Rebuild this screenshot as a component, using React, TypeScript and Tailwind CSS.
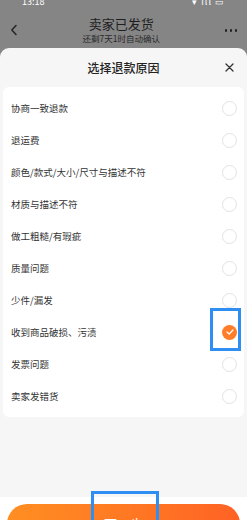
import React from "react";

const reasons = [
  "协商一致退款",
  "退运费",
  "颜色/款式/大小/尺寸与描述不符",
  "材质与描述不符",
  "做工粗糙/有瑕疵",
  "质量问题",
  "少件/漏发",
  "收到商品破损、污渍",
  "发票问题",
  "卖家发错货",
];

const selected = 7;

const App = () => {
  return (
    <div className="flex h-[520px] w-[247px] flex-col overflow-hidden bg-[#858585] font-['Noto_Sans_CJK_SC',sans-serif]">
      {/* dimmed page header */}
      <div className="shrink-0">
        <div className="flex h-[6px] items-end justify-between overflow-hidden px-[22px] text-[9px] leading-[9px] text-white">
          <span>13:18</span>
          <span className="tracking-[1px]">▾ ıll ▭</span>
        </div>
        <div className="flex h-[42px] items-start justify-between px-[10px]">
          <svg width="8" height="12" viewBox="0 0 8 12" className="mt-[18px]">
            <path d="M6 1.5L1.8 6L6 10.5" fill="none" stroke="#222" strokeWidth="1.4" strokeLinecap="round" strokeLinejoin="round" />
          </svg>
          <div className="flex flex-col items-center pt-[10px]">
            <p className="text-[13px] leading-[16px] text-[#1e1e1e]">卖家已发货</p>
            <p className="mt-[1px] text-[8.5px] leading-[11px] text-[#2a2a2a]">还剩7天1时自动确认</p>
          </div>
          <div className="mt-[23px] flex gap-[2.5px]">
            <span className="h-[2.5px] w-[2.5px] rounded-full bg-[#222]" />
            <span className="h-[2.5px] w-[2.5px] rounded-full bg-[#222]" />
            <span className="h-[2.5px] w-[2.5px] rounded-full bg-[#222]" />
          </div>
        </div>
      </div>

      {/* bottom sheet */}
      <div className="flex shrink-0 flex-col rounded-t-[9px] bg-[#f6f6f6]">
        <div className="grid h-[39px] grid-cols-[1fr_auto_1fr] items-center">
          <span />
          <p className="text-[12px] font-medium text-[#222]">选择退款原因</p>
          <div className="flex justify-end pr-[13px]">
            <svg width="9" height="9" viewBox="0 0 9 9">
              <path d="M1 1L8 8M8 1L1 8" stroke="#333" strokeWidth="1.3" strokeLinecap="round" />
            </svg>
          </div>
        </div>

        <div className="mx-[3px] rounded-[6px] bg-white py-[5px]">
          {reasons.map((r, i) => (
            <div key={r} className="relative flex h-[32px] items-center justify-between pl-[8px] pr-[7px]">
              <span className="text-[9.5px] text-[#333]">{r}</span>
              {i === selected ? (
                <span className="flex h-[15px] w-[15px] items-center justify-center rounded-full bg-[#ff7c28]">
                  <svg width="8" height="6" viewBox="0 0 8 6">
                    <path d="M1 3L3.2 5L7 1" fill="none" stroke="#fff" strokeWidth="1.2" strokeLinecap="round" strokeLinejoin="round" />
                  </svg>
                </span>
              ) : (
                <span className="h-[15px] w-[15px] rounded-full border border-[#e3e3e3]" />
              )}
              {i === selected && (
                <span className="absolute right-[3px] top-[-8px] bottom-[-3px] w-[31px] border-[3px] border-[#2e8ef2]" />
              )}
            </div>
          ))}
        </div>

        <div className="h-[80px]" />

        <div className="relative bg-white px-[7px] pt-[7px] pb-[10px]">
          <div className="flex h-[40px] items-center justify-center rounded-full bg-gradient-to-r from-[#ff8e22] to-[#ff6224]">
            <span className="text-[13px] text-white">下一步</span>
          </div>
          <span className="absolute left-[91px] top-[-6px] h-[50px] w-[68px] border-[3px] border-[#2e8ef2]" />
        </div>
      </div>
    </div>
  );
};

export default App;
